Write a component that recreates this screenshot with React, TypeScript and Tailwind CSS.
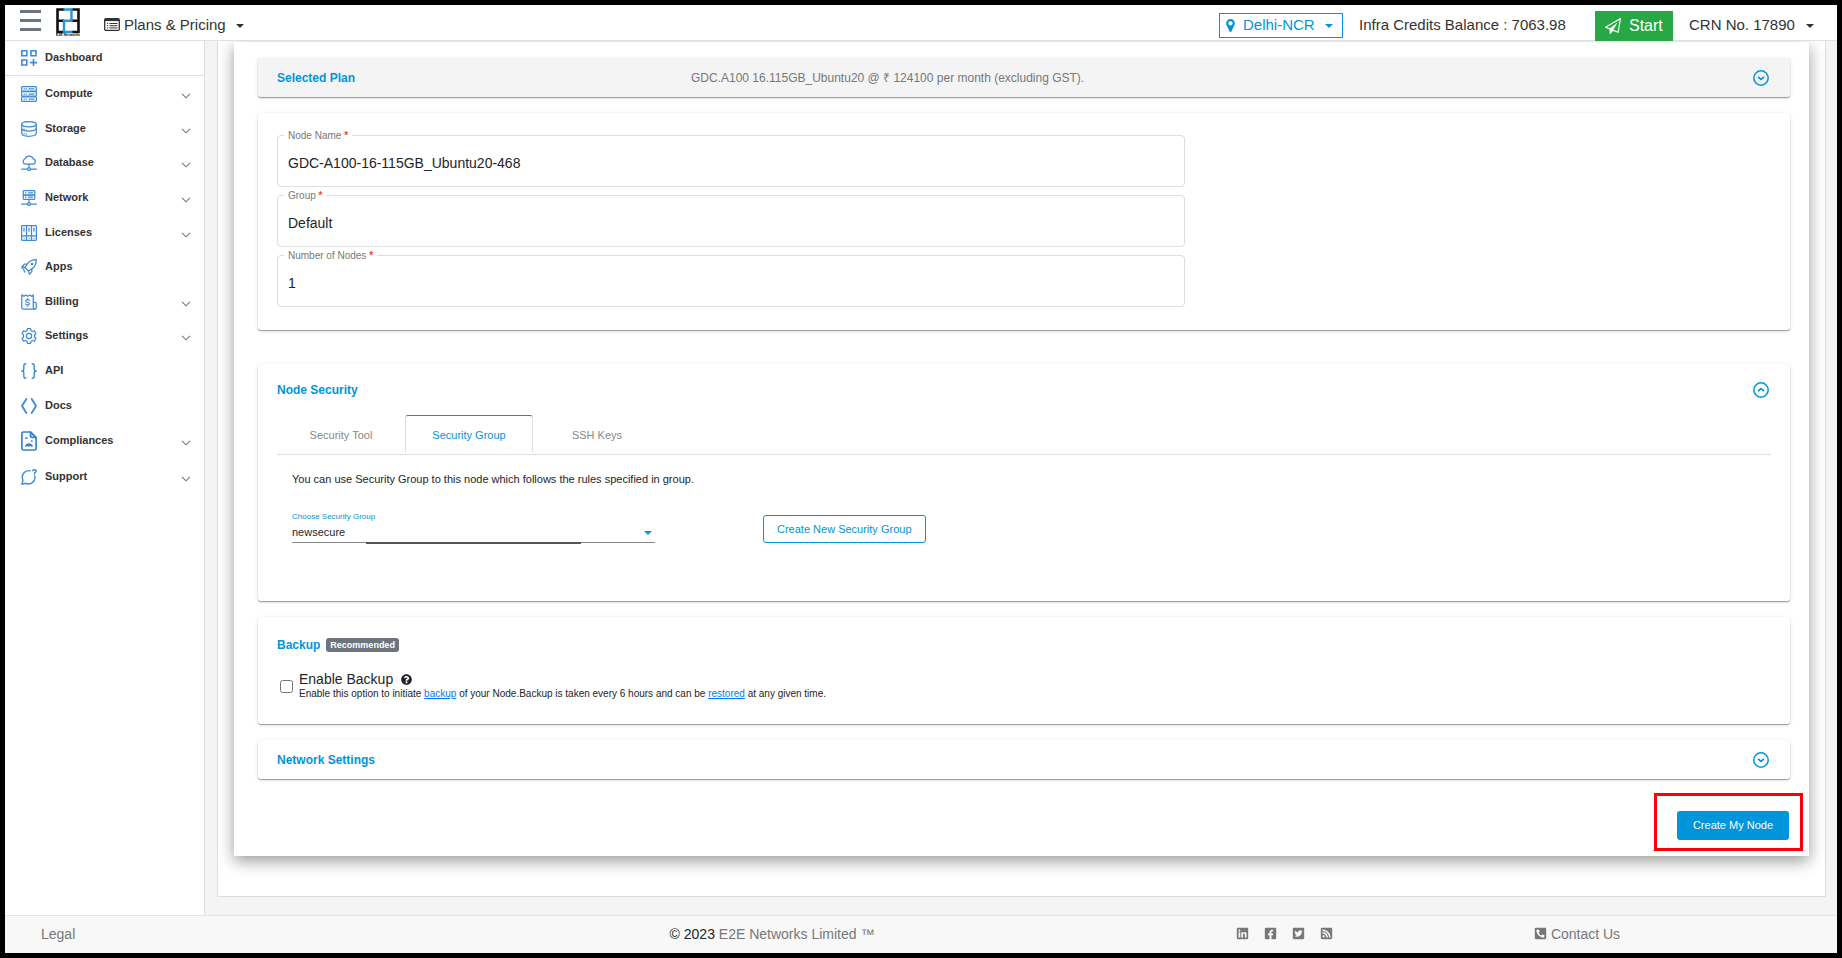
import React, { useState } from "react";
import {
  FaFacebookSquare,
  FaLinkedin,
  FaPhoneSquare,
  FaQuestionCircle,
  FaRssSquare,
  FaTwitterSquare,
} from "react-icons/fa";

const CARD = "rounded-[3px] bg-white px-[19px] shadow-[0_1px_1px_0_rgba(0,0,0,0.35),0_1px_4px_0_rgba(0,0,0,0.12)]";

type IconProps = { children: React.ReactNode };

function Glyph({ children }: IconProps) {
  return (
    <svg
      viewBox="0 0 16 16"
      className="size-4 shrink-0 text-[#3d8bd4]"
      fill="none"
      stroke="currentColor"
      strokeWidth="1.25"
      strokeLinecap="round"
      strokeLinejoin="round"
      aria-hidden="true"
    >
      {children}
    </svg>
  );
}

const icons = {
  dashboard: (
    <Glyph>
      <g strokeWidth="1.6" strokeLinejoin="miter">
        <path d="M.8.8h5v5h-5zM10 .8h5v5h-5zM.8 10h5v5h-5z" />
        <path d="M12.5 9.6v6M9.5 12.6h6" />
      </g>
    </Glyph>
  ),
  compute: (
    <Glyph>
      <rect x=".6" y=".6" width="14.8" height="4.5" rx="1" />
      <rect x=".6" y="5.7" width="14.8" height="4.5" rx="1" />
      <rect x=".6" y="10.8" width="14.8" height="4.5" rx="1" />
      <path d="M3 2.9h.5M5 2.9h.5M8 2.9h5M3 8h.5M5 8h.5M8 8h5M3 13.1h.5M5 13.1h.5M8 13.1h5" />
    </Glyph>
  ),
  storage: (
    <Glyph>
      <ellipse cx="8" cy="3.2" rx="7.2" ry="2.6" />
      <path d="M.8 3.2v9.4c0 1.5 3.2 2.7 7.2 2.7s7.2-1.2 7.2-2.7V3.2" />
      <path d="M.8 7.6c0 1.5 3.2 2.6 7.2 2.6s7.2-1.1 7.2-2.6" />
      <path d="M3 8.2h.3M3 12.6h.3M5.2 13.2h.3M5.2 9h.3" />
    </Glyph>
  ),
  database: (
    <Glyph>
      <path d="M4.5 9.2h7.3a2.7 2.7 0 0 0 .5-5.3A4.5 4.5 0 0 0 3.9 4 2.7 2.7 0 0 0 4.5 9.2z" />
      <path d="M8 9.2v3.3M.6 14.2h5.8M9.6 14.2h5.8" />
      <circle cx="8" cy="14.1" r="1.4" />
    </Glyph>
  ),
  network: (
    <Glyph>
      <rect x="2.2" y=".6" width="11.6" height="4.4" rx=".8" />
      <rect x="2.2" y="5" width="11.6" height="4.4" rx=".8" />
      <path d="M4.5 2.8H5M7.5 2.8h4M4.5 7.2H5M7.5 7.2h4M8 9.4v3.2M.6 14.2h5.8M9.6 14.2h5.8" />
      <circle cx="8" cy="14.1" r="1.4" />
    </Glyph>
  ),
  licenses: (
    <Glyph>
      <rect x=".6" y=".6" width="14.8" height="14.8" rx="1" />
      <path d="M5.5.6v14.8M10.5.6v14.8M.6 10.8h14.8M3 3v3M8 3v3M13 3v3M3 13h.2M8 13h.2M13 13h.2" />
    </Glyph>
  ),
  apps: (
    <Glyph>
      <path d="M15.3.7c-4 0-7 1.3-9 4.3L3.9 8.6 7.4 12l3.6-2.3c3-2 4.3-5 4.3-9z" />
      <circle cx="11" cy="5" r=".7" />
      <path d="M6.3 5 3.4 5.2 1 7.7l3 .9M11 9.7l-.2 2.9-2.5 2.6-.9-3.2M3.9 8.6.8 9.2M2.6 10.6l1.400 2.600" />
    </Glyph>
  ),
  billing: (
    <Glyph>
      <path d="M.8.9 3 2.3 4.8.9l2 1.4 2-1.4 1.8 1.4L12.300.9v12.600c0 1 .5 1.700 1.500 1.700H2.300C1.300 15.200.8 14.500.8 13.500z" />
      <path d="M12.300 8.300h1.800c.8 0 1.200.4 1.200 1.200v4c0 1-.6 1.700-1.500 1.700" />
      <path d="M8.300 6.400c-.3-.6-1-.8-1.800-.8-1 0-1.700.5-1.700 1.300 0 1.900 3.600.8 3.600 2.800 0 .8-.8 1.300-1.800 1.300-.9 0-1.600-.3-1.900-1M6.500 4.600v1M6.500 11v1.100" />
    </Glyph>
  ),
  settings: (
    <Glyph>
      <path d="M6.500.7h3l.5 2 1.400.8 2-.6 1.500 2.600L13.500 7v2l1.400 1.500-1.500 2.600-2-.6-1.400.8-.5 2h-3l-.5-2-1.400-.8-2 .6-1.500-2.600L2.500 9V7L1.100 5.500l1.500-2.600 2 .6L6 2.700z" />
      <circle cx="8" cy="8" r="2.600" />
    </Glyph>
  ),
  api: (
    <Glyph>
      <path
        strokeWidth="1.400"
        d="M4.800.8C3.200.8 2.800 1.600 2.800 3v2.700C2.800 7.200 2 8 .8 8c1.200 0 2 .8 2 2.300V13c0 1.400.4 2.200 2 2.200M11.200.8c1.600 0 2 .8 2 2.200v2.700c0 1.500.8 2.300 2 2.300-1.200 0-2 .8-2 2.300V13c0 1.400-.4 2.200-2 2.200"
      />
    </Glyph>
  ),
  docs: (
    <Glyph>
      <path strokeWidth="1.800" d="M5.300 1 1 8l4.300 7M10.700 1 15 8l-4.300 7" />
    </Glyph>
  ),
  compliances: (
    <svg
      viewBox="0 0 16 20"
      className="h-5 w-4 shrink-0 text-[#2f86d3]"
      fill="none"
      stroke="currentColor"
      strokeWidth="1.700"
      strokeLinejoin="round"
      strokeLinecap="round"
      aria-hidden="true"
    >
      <path d="M9.500 1H2.500C1.500 1 .9 1.600.9 2.500v15c0 .9.600 1.500 1.600 1.500h11c1 0 1.600-.600 1.600-1.500v-11z" />
      <path d="M9.500 1v4c0 1 .5 1.500 1.500 1.500h4z" fill="currentColor" fillOpacity=".35" />
      <path d="M5 7.200h.8M10.500 10h.5" />
      <path d="M4.800 15c.5-1.400 1.500-2 2.700-2s2.600.4 3.500 2M6.800 14.600h2.200" />
    </svg>
  ),
  support: (
    <Glyph>
      <path strokeWidth="1.400" d="M9 1.700A6.600 6.600 0 0 0 2 11.200L.9 15.200l4-.8A6.600 6.600 0 0 0 14 7.800" />
      <path strokeWidth="1.400" d="M11.700 1.700c.3-.7 1-1 1.800-1 1 0 1.700.6 1.700 1.400 0 1.300-1.700 1.200-1.700 2.500M13.500 6.300v.1" />
    </Glyph>
  ),
};

function Chevron() {
  return (
    <svg viewBox="0 0 10 6" className="mt-1 h-1.5 w-2.5" fill="none" stroke="#777" strokeWidth="1.100" aria-hidden="true">
      <path d="M1 .8l4 4 4-4" />
    </svg>
  );
}

function Caret() {
  return (
    <svg viewBox="0 0 8 4" className="h-1 w-2 shrink-0" fill="currentColor" aria-hidden="true">
      <path d="M0 0h8L4 4z" />
    </svg>
  );
}

function CircleToggle({ open, label, onClick }: { open: boolean; label: string; onClick: () => void }) {
  return (
    <button type="button" aria-label={label} aria-expanded={open} onClick={onClick} className="mr-0.5 text-[#0095db]">
      <svg viewBox="0 0 16 16" className="block size-4" fill="none" stroke="currentColor" strokeWidth="1.500">
        <circle cx="8" cy="8" r="7.200" />
        <path d={open ? "M5 9.200l3-2.600 3 2.600" : "M5 6.900l3 2.600 3-2.600"} strokeWidth="1.700" />
      </svg>
    </button>
  );
}

function NavItem({ icon, label, expandable }: { icon: React.ReactNode; label: string; expandable?: boolean }) {
  return (
    <li className="flex items-center">
      <a href="#" className="flex flex-1 items-center pr-[13px] pl-4 text-[11px] font-bold text-[#333]">
        {icon}
        <span className="ml-2 flex-1 pb-0.5 leading-4">{label}</span>
        {expandable && <Chevron />}
      </a>
    </li>
  );
}

function Field({ id, label, value }: { id: string; label: string; value: string }) {
  return (
    <div className="relative h-[52px] rounded border border-[#ddd]">
      <label htmlFor={id} className="absolute -top-2 left-1.5 bg-white px-1 text-[10px] leading-4 text-[#777]">
        {label} <span className="font-bold text-[#f44336]">*</span>
      </label>
      <input
        id={id}
        defaultValue={value}
        className="h-full w-full bg-transparent px-2.5 pt-1 text-sm text-[#212529] outline-none"
      />
    </div>
  );
}

function Logo() {
  return (
    <svg viewBox="0 0 24 30" className="h-[30px] w-6" fill="none" aria-label="E2E Networks" role="img">
      <g stroke="#111" strokeWidth="2.600">
        <path d="M8.500 1.500H1.500v22.500h7M15.500 1.500h7v22.500h-7M1.500 12.700h6.500M16 12.700h6.500" />
      </g>
      <path d="M7.500 1.500h8v11.200h-7.500v11.300h8.500" stroke="#2a94d6" strokeWidth="2.400" />
      <text x="12" y="28" textAnchor="middle" fontSize="3.700" fontWeight="bold" fill="#111">
        E2E Networks
      </text>
    </svg>
  );
}

export default function App() {
  const [planOpen, setPlanOpen] = useState(false);
  const [securityOpen, setSecurityOpen] = useState(true);
  const [networkOpen, setNetworkOpen] = useState(false);
  const tabs = ["Security Tool", "Security Group", "SSH Keys"];
  const [tab, setTab] = useState(tabs[1]);

  return (
    <div className="flex min-h-screen flex-col border-[5px] border-black bg-white font-['Liberation_Sans',Arial,sans-serif] text-[#212529]">
      <header className="flex h-9 items-center border-b border-[#dee2e6] text-[15px] text-[#333]">
        <button type="button" aria-label="Menu" className="mb-1 ml-[15px] flex w-[21px] flex-col gap-1.5">
          <span className="h-[3px] bg-[#6c757d]" />
          <span className="h-[3px] bg-[#6c757d]" />
          <span className="h-[3px] bg-[#6c757d]" />
        </button>
        <a href="#" className="ml-[15px]">
          <Logo />
        </a>
        <button type="button" className="ml-6 flex items-center pt-1.5">
          <svg viewBox="0 0 16 13" className="mb-0.5 h-[13px] w-4" fill="none" stroke="#333" aria-hidden="true">
            <rect x=".7" y=".7" width="14.600" height="11.600" rx="1.200" strokeWidth="1.300" />
            <path d="M1 2h14" strokeWidth="2.200" />
            <path d="M3 5.500h1.200M5.500 5.500h8M3 7.700h1.200M5.500 7.700h8M3 9.900h1.200M5.500 9.900h8" />
          </svg>
          <span className="mr-2.5 ml-1">Plans &amp; Pricing</span>
          <Caret />
        </button>
        <div className="ml-auto flex items-center pr-[23px]">
          <button
            type="button"
            className="mt-1.5 flex h-[25px] w-[124px] items-center border border-[#0095db] pl-1.5 text-[#0095db]"
          >
            <svg viewBox="0 0 1024 1536" className="h-[13px] w-[9px]" fill="currentColor" aria-hidden="true">
              <path d="M768 512q0-106-75-181t-181-75-181 75-75 181 75 181 181 75 181-75 75-181zm256 0q0 109-33 179l-364 774q-16 33-47.500 52t-67.500 19-67.500-19-46.500-52l-365-774q-33-70-33-179 0-212 150-362t362-150 362 150 150 362z" />
            </svg>
            <span className="mr-2.5 ml-2">Delhi-NCR</span>
            <Caret />
          </button>
          <span className="mt-1.5 ml-4 w-[212px]">Infra Credits Balance : 7063.98</span>
          <button
            type="button"
            className="mt-2 ml-6 flex h-[31px] w-[78px] items-center gap-2 bg-[#28a745] pb-0.5 pl-2.5 text-base text-white"
          >
            <svg viewBox="0 0 1792 1792" className="size-4" fill="currentColor" aria-hidden="true">
              <path d="M1764 11q33 24 27 64l-256 1536q-5 29-32 45-14 8-31 8-11 0-24-5l-527-215-298 327q-18 21-47 21-14 0-23-4-19-7-30-23.500t-11-36.500v-452l-472-193q-37-14-40-55-3-39 32-59l1664-960q35-21 68 2zm-342 1499l221-1323-1434 827 336 137 863-639-478 797z" />
            </svg>
            Start
          </button>
          <button type="button" className="mt-1.5 ml-4 flex items-center gap-2">
            <span className="w-[109px] text-left">CRN No. 17890</span>
            <Caret />
          </button>
        </div>
      </header>

      <div className="flex flex-1">
        <nav aria-label="Main" className="w-[200px] shrink-0 border-r border-[#ddd]">
          <ul className="grid h-[35px] border-b border-[#ddd] pb-px">
            <NavItem icon={icons.dashboard} label="Dashboard" />
          </ul>
          <ul className="mt-px grid h-[346px] auto-rows-fr">
            <NavItem icon={icons.compute} label="Compute" expandable />
            <NavItem icon={icons.storage} label="Storage" expandable />
            <NavItem icon={icons.database} label="Database" expandable />
            <NavItem icon={icons.network} label="Network" expandable />
            <NavItem icon={icons.licenses} label="Licenses" expandable />
            <NavItem icon={icons.apps} label="Apps" />
            <NavItem icon={icons.billing} label="Billing" expandable />
            <NavItem icon={icons.settings} label="Settings" expandable />
            <NavItem icon={icons.api} label="API" />
            <NavItem icon={icons.docs} label="Docs" />
          </ul>
          <ul className="grid auto-rows-[36px]">
            <NavItem icon={icons.compliances} label="Compliances" expandable />
            <NavItem icon={icons.support} label="Support" expandable />
          </ul>
        </nav>

        <main className="flex flex-1 flex-col overflow-hidden bg-[#f4f4f4] pr-[11px] pb-[18px] pl-3">
          <div className="flex-1 border border-t-0 border-[#ddd] bg-white px-4 pt-px pb-10">
            <div className="flex flex-col bg-white pt-4 pr-[19px] pb-4 pl-6 shadow-[0_5px_15px_0_rgba(0,0,0,0.4)]">
              <section className="flex h-[39px] items-center rounded-[3px] bg-[#f4f4f4] px-[19px] shadow-[0_1px_1px_0_rgba(0,0,0,0.35),0_1px_4px_0_rgba(0,0,0,0.12)]">
                <h2 className="w-[414px] text-xs font-bold text-[#0095db]">Selected Plan</h2>
                <p className="flex-1 text-xs text-[#777]">
                  GDC.A100 16.115GB_Ubuntu20 @ ₹ 124100 per month (excluding GST).
                </p>
                <CircleToggle open={planOpen} label="Selected Plan" onClick={() => setPlanOpen(!planOpen)} />
              </section>

              <section className={`${CARD} mt-4 pt-[22px] pb-[23px]`}>
                <div className="flex w-full max-w-[908px] flex-col gap-2">
                  <Field id="node-name" label="Node Name" value="GDC-A100-16-115GB_Ubuntu20-468" />
                  <Field id="group" label="Group" value="Default" />
                  <Field id="node-count" label="Number of Nodes" value="1" />
                </div>
              </section>

              <section className={`${CARD} mt-[34px] pt-4 pb-[58px]`}>
                <div className="flex items-center justify-between">
                  <h2 className="text-xs leading-5 font-bold text-[#0095db]">Node Security</h2>
                  <CircleToggle
                    open={securityOpen}
                    label="Node Security"
                    onClick={() => setSecurityOpen(!securityOpen)}
                  />
                </div>
                <div role="tablist" className="mt-[15px] flex border-b border-[#ddd] pb-0.5">
                  {tabs.map((name) => (
                    <button
                      key={name}
                      type="button"
                      role="tab"
                      aria-selected={name === tab}
                      onClick={() => setTab(name)}
                      className={
                        name === tab
                          ? "h-[37px] w-32 rounded-t-[3px] border-x border-t border-x-[#ddd] border-t-[#0095db] pt-0.5 text-[11px] text-[#0095db]"
                          : "h-[37px] w-32 pt-1 text-[11px] text-[#888]"
                      }
                    >
                      {name}
                    </button>
                  ))}
                </div>
                <div className="px-[15px] pt-4">
                  <p className="text-[11px] leading-4">
                    You can use Security Group to this node which follows the rules specified in group.
                  </p>
                  <div className="mt-6 flex items-end">
                    <div className="relative w-[363px]">
                      <label htmlFor="security-group" className="block text-[8px] leading-3 text-[#0095db]">
                        Choose Security Group
                      </label>
                      <select
                        id="security-group"
                        defaultValue="newsecure"
                        className="block h-5 w-full appearance-none border-b border-[#888] bg-transparent text-[11px] outline-none"
                      >
                        <option>newsecure</option>
                      </select>
                      <span className="pointer-events-none absolute right-[3px] bottom-2 text-[#0095db]">
                        <Caret />
                      </span>
                      <span className="absolute -bottom-px left-[74px] h-0.5 w-[215px] bg-[#555]" />
                    </div>
                    <button
                      type="button"
                      className="ml-[108px] h-7 rounded-[3px] border border-[#0095db] px-[13px] text-[11px] text-[#0095db]"
                    >
                      Create New Security Group
                    </button>
                  </div>
                </div>
              </section>

              <section className={`${CARD} mt-4 pt-[18px] pb-[23px]`}>
                <div className="flex items-center gap-1.5">
                  <h2 className="text-xs leading-5 font-bold text-[#0095db]">Backup</h2>
                  <span className="rounded-[3px] bg-[#6c757d] px-1 text-[9px] leading-[14px] font-bold text-white">
                    Recommended
                  </span>
                </div>
                <div className="mt-4 flex items-center">
                  <input id="enable-backup" type="checkbox" className="ml-[3px] size-[13px]" />
                  <div className="ml-1.5">
                    <div className="flex items-center gap-2 text-sm leading-4">
                      <label htmlFor="enable-backup">Enable Backup</label>
                      <FaQuestionCircle className="size-[11px]" aria-label="Help" />
                    </div>
                    <p className="text-[10px] leading-[14px]">
                      Enable this option to initiate{" "}
                      <a href="#" className="text-[#007bff] underline">
                        backup
                      </a>{" "}
                      of your Node.Backup is taken every 6 hours and can be{" "}
                      <a href="#" className="text-[#007bff] underline">
                        restored
                      </a>{" "}
                      at any given time.
                    </p>
                  </div>
                </div>
              </section>

              <section className={`${CARD} mt-4 flex h-[39px] items-center justify-between`}>
                <h2 className="text-xs font-bold text-[#0095db]">Network Settings</h2>
                <CircleToggle
                  open={networkOpen}
                  label="Network Settings"
                  onClick={() => setNetworkOpen(!networkOpen)}
                />
              </section>

              <div className="relative mt-8 mr-px self-end">
                <button type="button" className="block h-[29px] rounded-[3px] bg-[#0095db] px-4 text-[11px] text-white">
                  Create My Node
                </button>
                <span className="pointer-events-none absolute -top-[18px] -right-3.5 -bottom-[11px] -left-[23px] border-[3px] border-[#fb0007]" />
              </div>
            </div>
          </div>
        </main>
      </div>

      <footer className="grid h-[38px] grid-cols-[400fr_734fr_290fr_296fr_112fr] items-center border-t border-[#e4e4e4] bg-[#f8f8f8] pb-0.5 text-sm text-[#777]">
        <a href="#" className="pl-9">
          Legal
        </a>
        <p className="text-center">
          <span className="text-[#212529]">© 2023</span> E2E Networks Limited ™
        </p>
        <div className="flex justify-center gap-[15px]">
          <a href="#" aria-label="LinkedIn">
            <FaLinkedin className="size-[13px]" />
          </a>
          <a href="#" aria-label="Facebook">
            <FaFacebookSquare className="size-[13px]" />
          </a>
          <a href="#" aria-label="Twitter">
            <FaTwitterSquare className="size-[13px]" />
          </a>
          <a href="#" aria-label="RSS">
            <FaRssSquare className="size-[13px]" />
          </a>
        </div>
        <a href="#" className="flex items-center justify-center gap-1">
          <FaPhoneSquare className="size-[13px] -scale-x-100" />
          Contact Us
        </a>
      </footer>
    </div>
  );
}
